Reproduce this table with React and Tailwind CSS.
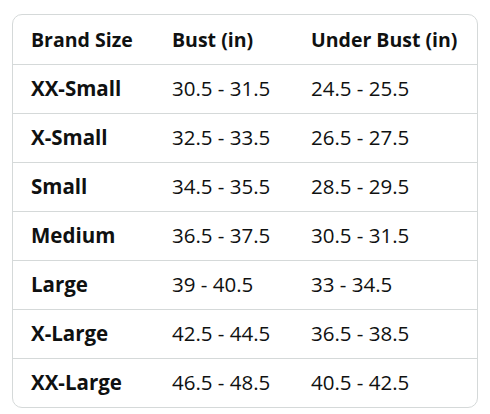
const rows = [
  ["XX-Small", "30.5 - 31.5", "24.5 - 25.5"],
  ["X-Small", "32.5 - 33.5", "26.5 - 27.5"],
  ["Small", "34.5 - 35.5", "28.5 - 29.5"],
  ["Medium", "36.5 - 37.5", "30.5 - 31.5"],
  ["Large", "39 - 40.5", "33 - 34.5"],
  ["X-Large", "42.5 - 44.5", "36.5 - 38.5"],
  ["XX-Large", "46.5 - 48.5", "40.5 - 42.5"],
];

export default function App() {
  return (
    <div className="bg-white w-[490px] h-[414px] pt-[14px] pl-[12px] font-['Open_Sans',sans-serif] text-[#0f1111]">
      <div className="w-[466px] border border-[#d5d9d9] rounded-[10px] overflow-hidden">
        <table className="w-full border-collapse">
          <colgroup>
            <col className="w-[140px]" />
            <col className="w-[139px]" />
            <col />
          </colgroup>
          <thead>
            <tr className="h-[49px] border-b border-[#d5d9d9] text-[19.5px]">
              <th className="text-left font-bold pl-[18px]">Brand Size</th>
              <th className="text-left font-bold pl-[19px]">Bust (in)</th>
              <th className="text-left font-bold pl-[19px]">Under Bust (in)</th>
            </tr>
          </thead>
          <tbody className="text-[20.5px]">
            {rows.map((r, i) => (
              <tr
                key={r[0]}
                className={`h-[49px] ${i < rows.length - 1 ? "border-b border-[#d5d9d9]" : ""}`}
              >
                <td className="font-bold pl-[18px]">{r[0]}</td>
                <td className="pl-[19px]">{r[1]}</td>
                <td className="pl-[19px]">{r[2]}</td>
              </tr>
            ))}
          </tbody>
        </table>
      </div>
    </div>
  );
}
